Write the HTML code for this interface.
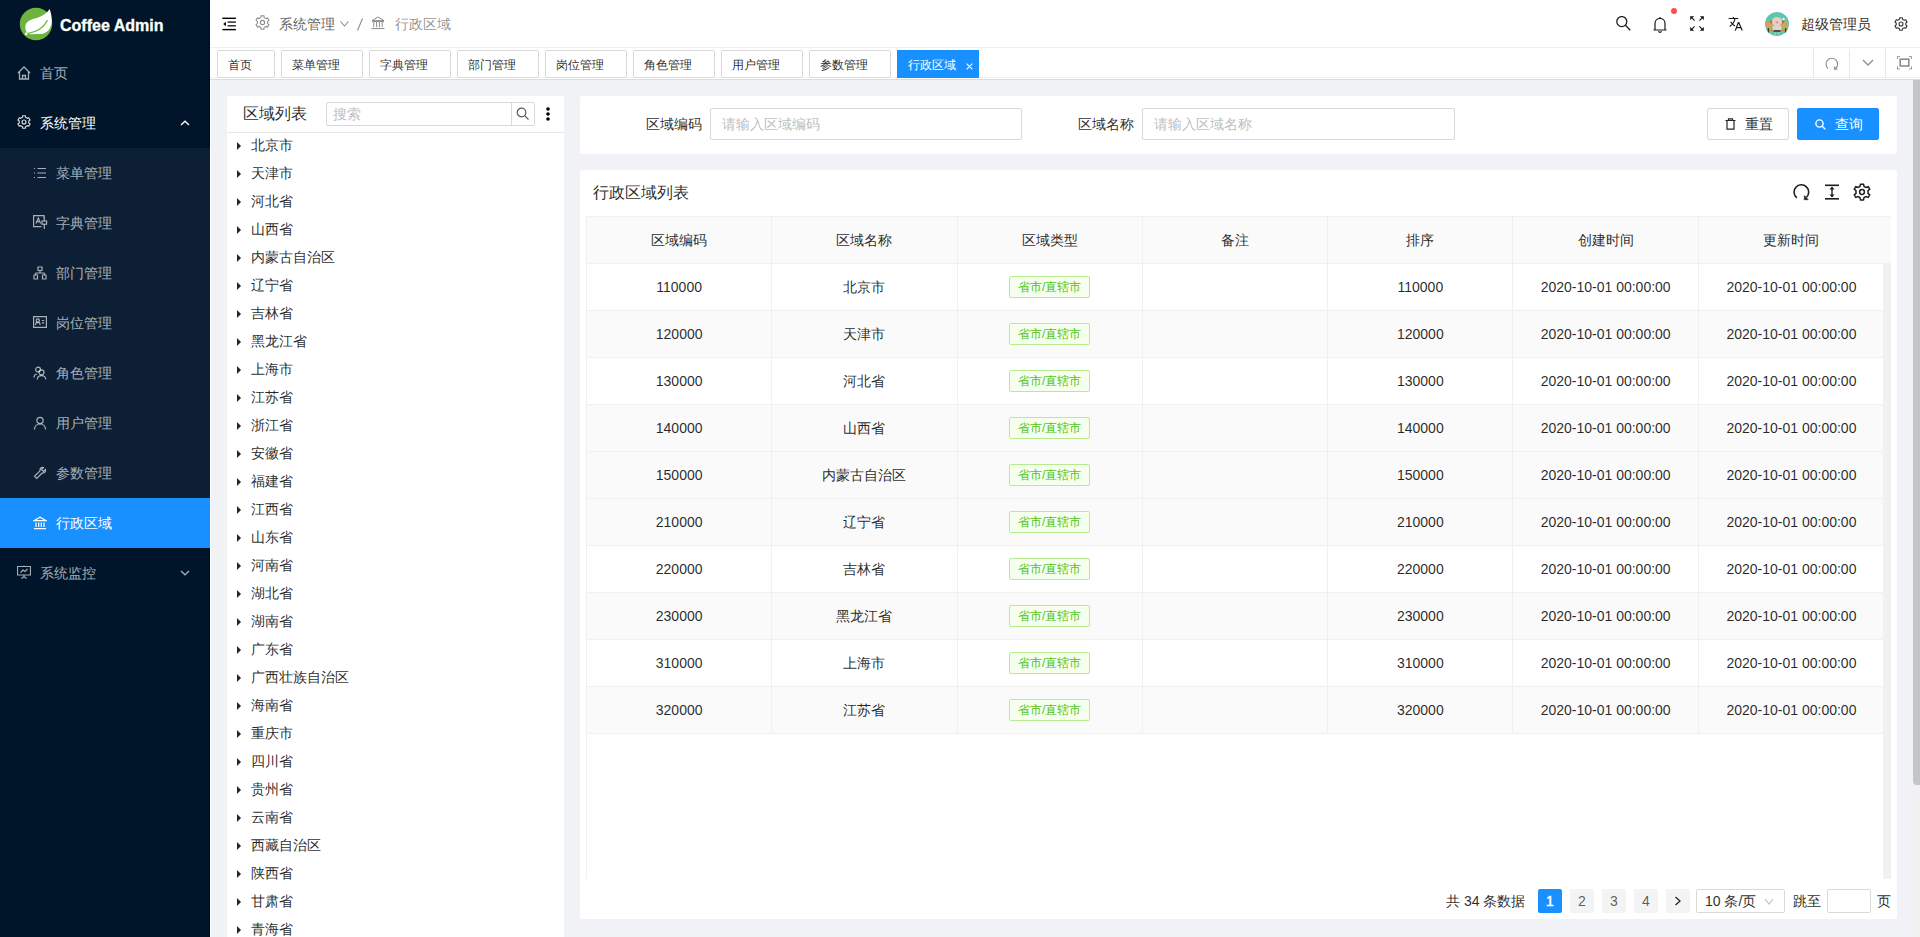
<!DOCTYPE html>
<html><head><meta charset="utf-8"><style>
*{box-sizing:border-box;margin:0;padding:0}
html,body{width:1920px;height:937px;overflow:hidden}
body{position:relative;background:#f0f2f5;font-family:"Liberation Sans",sans-serif;font-size:14px;color:rgba(0,0,0,.85)}
.abs{position:absolute}
svg{display:block}
/* sidebar */
#side{position:absolute;left:0;top:0;width:210px;height:937px;background:#001529;box-shadow:inset -1px 0 0 #000c1c}
#sideline{position:absolute;left:210px;top:0;width:1px;height:937px;background:#fff}
#logo-t{position:absolute;left:60px;top:15px;font-weight:bold;font-size:16px;-webkit-text-stroke:0.3px #fff;color:#fff;line-height:22px;letter-spacing:0}
.mi{position:absolute;left:0;width:210px;height:50px;line-height:50px;color:rgba(255,255,255,.65);font-size:14px}
.mi span{position:absolute;top:0}
.mi svg{position:absolute}
#sub{position:absolute;left:0;top:148px;width:210px;height:400px;background:#0d1f35}
.mi.act{background:#1890ff;color:#fff}
/* header */
#hdr{position:absolute;left:210px;top:0;width:1710px;height:48px;background:#fff;border-bottom:1px solid #f0f0f0}
#tabs{position:absolute;left:210px;top:48px;width:1710px;height:32px;background:#fff;border-bottom:1px solid #dcdcdc}
.tab{position:absolute;top:2px;height:28px;border:1px solid #d9d9d9;border-radius:2px;background:#fff;font-size:12px;line-height:28px;color:rgba(0,0,0,.85);padding-left:10px}
.tab.act{background:#1890ff;border-color:#1890ff;color:#fff;border-radius:0}
.tsep{position:absolute;top:1px;width:1px;height:29px;background:#e8e8e8}
/* panels */
.card{position:absolute;background:#fff;border-radius:2px}
.ti{position:absolute;left:0;height:28px;line-height:28px;font-size:14px;color:rgba(0,0,0,.85)}
.ti span{position:absolute;left:24px;top:0;white-space:nowrap}
.tri{position:absolute;left:10px;top:11px;width:0;height:0;border-left:4.5px solid rgba(0,0,0,.85);border-top:4px solid transparent;border-bottom:4px solid transparent}
.inp{position:absolute;border:1px solid #d9d9d9;border-radius:2px;background:#fff;color:#bfbfbf;font-size:14px}
.lbl{position:absolute;font-size:14px;color:rgba(0,0,0,.85);line-height:32px}
.btn{position:absolute;height:32px;border:1px solid #d9d9d9;border-radius:2px;background:#fff;font-size:14px;line-height:30px}
.btn.pri{background:#1890ff;border-color:#1890ff;color:#fff}
/* table */
#thead{position:absolute;left:586px;top:216px;width:1305px;height:48px;background:#fafafa;border-top:1px solid #f0f0f0;border-left:1px solid #f0f0f0;border-bottom:1px solid #f0f0f0}
.th{position:absolute;top:0;width:185.3px;height:46px;line-height:46px;text-align:center;border-right:1px solid #f0f0f0;color:rgba(0,0,0,.85)}
.tr{position:absolute;left:586px;width:1297px;height:47px;background:#fff;border-bottom:1px solid #f0f0f0;border-left:1px solid #f0f0f0}
.tr.g{background:#fafafa}
.td{position:absolute;top:0;width:185.3px;height:46px;line-height:46px;text-align:center;border-right:1px solid #f0f0f0;color:rgba(0,0,0,.85)}
.tag{display:inline-block;height:22px;line-height:20px;padding:0 8px;font-size:12px;border:1px solid #b7eb8f;background:#f6ffed;color:#52c41a;border-radius:2px;vertical-align:middle;position:relative;top:-1px}
.pg{position:absolute;top:889px;width:24px;height:24px;line-height:24px;text-align:center;background:#f4f4f5;border-radius:2px;color:rgba(0,0,0,.65);font-size:14px}
.pg.act{background:#1890ff;color:#fff;-webkit-text-stroke:0.5px #fff}
.th:nth-child(7){border-right:none}
.td:nth-child(7){border-right:none}


</style></head><body>
<div id="side">
  <svg class="abs" style="left:19px;top:7px" width="34" height="34" viewBox="0 0 34 34">
    <circle cx="17" cy="17" r="16.2" fill="#6db33f"/>
    <path d="M30.6 1.9 C 28 6, 23 9.5, 16 11.5 C 10 13, 6.3 15.5, 6.3 20 C 6.3 24.5, 8.5 27.2, 12 27.2 L 24 26.8 C 29 25.5, 32.8 20, 32.8 14 C 32.8 9, 31.8 5, 30.6 1.9 Z" fill="#fff"/>
    <path d="M28.6 13.3 C 25 20, 18 25, 8.5 26.6" stroke="#6db33f" stroke-width="1.3" fill="none"/>
    <circle cx="7.2" cy="26.9" r="1.3" fill="#fff"/>
  </svg>
  <div id="logo-t">Coffee Admin</div>

  <div class="mi" style="top:48px">
    <svg style="left:17px;top:18px" width="14" height="14" viewBox="0 0 14 14" fill="none" stroke="rgba(255,255,255,.65)" stroke-width="1.3"><path d="M1 7 L7 1 L13 7 M2.5 5.5 V13 H11.5 V5.5 M5.5 13 V9.5 H8.5 V13"/></svg>
    <span style="left:40px">首页</span>
  </div>
  <div class="mi" style="top:98px;color:#fff">
    <svg style="left:17px;top:17px" width="14" height="14" viewBox="0 0 24 24" fill="none" stroke="rgba(255,255,255,.85)" stroke-width="2" stroke-linejoin="round"><path d="M9.40 4.01 L9.73 1.34 L14.27 1.34 L14.60 4.01 L17.62 5.76 L20.10 4.71 L22.37 8.63 L20.22 10.25 L20.22 13.75 L22.37 15.37 L20.10 19.29 L17.62 18.24 L14.60 19.99 L14.27 22.66 L9.73 22.66 L9.40 19.99 L6.38 18.24 L3.90 19.29 L1.63 15.37 L3.78 13.75 L3.78 10.25 L1.63 8.63 L3.90 4.71 L6.38 5.76 Z"/><circle cx="12" cy="12" r="3.4"/></svg>
    <span style="left:40px">系统管理</span>
    <svg style="left:180px;top:22px" width="10" height="6" viewBox="0 0 10 6" fill="none" stroke="#fff" stroke-width="1.3"><path d="M1 5 L5 1.2 L9 5"/></svg>
  </div>
  <div id="sub"></div>
  <div class="mi" style="top:148px">
    <svg style="left:33px;top:18px" width="14" height="14" viewBox="0 0 14 14" fill="none" stroke="rgba(255,255,255,.65)" stroke-width="1.2"><path d="M1 2.5 H2 M1 7 H2 M1 11.5 H2 M4.5 2.5 H13 M4.5 7 H13 M4.5 11.5 H13"/></svg>
    <span style="left:56px">菜单管理</span>
  </div>
  <div class="mi" style="top:198px">
    <svg style="left:33px;top:17px" width="15" height="15" viewBox="0 0 15 15" fill="none" stroke="rgba(255,255,255,.65)" stroke-width="1.2"><path d="M11 3.5 V0.6 H0.6 V11.6 H8.5 M3 8.5 L5.3 3 L7.6 8.5 M3.9 6.6 H6.7 M11.3 1.5 V5.5 M11.3 9.5 V14"/><rect x="9" y="6" width="4.6" height="3.2"/></svg>
    <span style="left:56px">字典管理</span>
  </div>
  <div class="mi" style="top:248px">
    <svg style="left:33px;top:18px" width="14" height="14" viewBox="0 0 14 14" fill="none" stroke="rgba(255,255,255,.65)" stroke-width="1.2"><path d="M5 1 H9 V4.5 H5 Z M7 4.5 V7 M2.5 7 H11.5 M2.5 7 V9 M11.5 7 V9 M1 9 H4.5 V13 H1 Z M9.5 9 H13 V13 H9.5 Z"/></svg>
    <span style="left:56px">部门管理</span>
  </div>
  <div class="mi" style="top:298px">
    <svg style="left:33px;top:18px" width="14" height="13" viewBox="0 0 14 13" fill="none" stroke="rgba(255,255,255,.65)" stroke-width="1.2"><path d="M0.6 0.6 H13.4 V11.4 H0.6 Z M2.5 9 C2.5 7.2 3.5 6.3 4.8 6.3 C6.1 6.3 7.1 7.2 7.1 9 M8.8 4.5 H11.2 M8.8 6.8 H11.2"/><circle cx="4.8" cy="4.4" r="1.6"/></svg>
    <span style="left:56px">岗位管理</span>
  </div>
  <div class="mi" style="top:348px">
    <svg style="left:33px;top:18px" width="14" height="14" viewBox="0 0 14 14" fill="none" stroke="rgba(255,255,255,.65)" stroke-width="1.2"><circle cx="5.1" cy="3.5" r="2.4"/><circle cx="8.5" cy="6.3" r="2.5"/><path d="M4.3 13.6 C4.3 11 6 9.6 8.5 9.6 C11 9.6 12.8 11 12.8 13.6 M1 11.5 C1 9.5 2.3 8.2 4 8"/></svg>
    <span style="left:56px">角色管理</span>
  </div>
  <div class="mi" style="top:398px">
    <svg style="left:33px;top:18px" width="14" height="14" viewBox="0 0 14 14" fill="none" stroke="rgba(255,255,255,.65)" stroke-width="1.2"><circle cx="7" cy="4.5" r="3.2"/><path d="M1.5 13.5 C1.5 10 4 8 7 8 C10 8 12.5 10 12.5 13.5"/></svg>
    <span style="left:56px">用户管理</span>
  </div>
  <div class="mi" style="top:448px">
    <svg style="left:33px;top:18px" width="14" height="14" viewBox="0 0 14 14" fill="none" stroke="rgba(255,255,255,.65)" stroke-width="1.2"><path d="M12.5 3.5 L10.5 5.5 L8.5 3.5 L10.5 1.5 C8.5 0.8 6.5 2.5 7 4.8 L1.5 10.3 L3.7 12.5 L9.2 7 C11.5 7.5 13.2 5.5 12.5 3.5 Z"/></svg>
    <span style="left:56px">参数管理</span>
  </div>
  <div class="mi act" style="top:498px">
    <svg style="left:33px;top:18px" width="14" height="14" viewBox="0 0 14 14" fill="none" stroke="#fff" stroke-width="1.2"><path d="M1.2 4.6 L7 1.2 L12.8 4.6 Z M3 6.5 V11 M5.7 6.5 V11 M8.3 6.5 V11 M11 6.5 V11 M1 12.6 H13"/></svg>
    <span style="left:56px">行政区域</span>
  </div>
  <div class="mi" style="top:548px">
    <svg style="left:17px;top:17px" width="14" height="14" viewBox="0 0 14 14" fill="none" stroke="rgba(255,255,255,.65)" stroke-width="1.2"><path d="M7 0.5 V1.5 M0.5 1.5 H13.5 V10 H0.5 Z M3.5 7.5 L6 5 L8 6.5 L10.5 4 M7 10 V12 M4.5 13.5 L7 11.5 L9.5 13.5"/></svg>
    <span style="left:40px">系统监控</span>
    <svg style="left:180px;top:22px" width="10" height="6" viewBox="0 0 10 6" fill="none" stroke="rgba(255,255,255,.65)" stroke-width="1.3"><path d="M1 1 L5 4.8 L9 1"/></svg>
  </div>
</div>

<div id="sideline"></div>
<div id="hdr">
  <svg class="abs" style="left:12px;top:17px" width="14" height="14" viewBox="0 0 14 14" fill="#000"><rect x="0.3" y="0.6" width="13.6" height="1.4"/><rect x="5.6" y="4.4" width="8.3" height="1.4" fill="#222"/><rect x="5.6" y="8.1" width="8.3" height="1.4" fill="#222"/><rect x="0.3" y="11.9" width="13.6" height="1.4"/><path d="M1.2 7 L3.8 4.7 V9.3 Z"/></svg>
  <svg class="abs" style="left:45px;top:15px" width="15" height="15" viewBox="0 0 24 24" fill="none" stroke="#8c8c8c" stroke-width="1.7"><path d="M9.40 4.01 L9.73 1.34 L14.27 1.34 L14.60 4.01 L17.62 5.76 L20.10 4.71 L22.37 8.63 L20.22 10.25 L20.22 13.75 L22.37 15.37 L20.10 19.29 L17.62 18.24 L14.60 19.99 L14.27 22.66 L9.73 22.66 L9.40 19.99 L6.38 18.24 L3.90 19.29 L1.63 15.37 L3.78 13.75 L3.78 10.25 L1.63 8.63 L3.90 4.71 L6.38 5.76 Z"/><circle cx="12" cy="12" r="3.4"/></svg>
  <div class="abs" style="left:69px;top:13px;line-height:22px;color:rgba(0,0,0,.65)">系统管理</div>
  <svg class="abs" style="left:130px;top:21px" width="9" height="6" viewBox="0 0 9 6" fill="none" stroke="#8c8c8c" stroke-width="1.1"><path d="M0.5 0.5 L4.5 5 L8.5 0.5"/></svg>
  <svg class="abs" style="left:146px;top:18px" width="8" height="13" viewBox="0 0 8 13" stroke="#8c8c8c" stroke-width="1.1"><path d="M6.5 0.5 L1.5 12.5"/></svg>
  <svg class="abs" style="left:161px;top:16px" width="14" height="14" viewBox="0 0 14 14" fill="none" stroke="#8c8c8c" stroke-width="1"><path d="M1 4.6 L7 1 L13 4.6 Z M1 5.6 H13 M2.8 6 V11.2 M5.6 6 V11.2 M8.4 6 V11.2 M11.2 6 V11.2 M0.5 12.6 H13.5" stroke-linejoin="round"/></svg>
  <div class="abs" style="left:185px;top:13px;line-height:22px;color:rgba(0,0,0,.45)">行政区域</div>

  <svg class="abs" style="left:1406px;top:16px" width="15" height="15" viewBox="0 0 15 15" fill="none" stroke="#1a1a1a" stroke-width="1.25"><circle cx="5.8" cy="5.6" r="5"/><path d="M9.4 9.3 L14.3 14.3"/></svg>
  <svg class="abs" style="left:1443px;top:16px" width="14" height="17" viewBox="0 0 14 17" fill="none" stroke="#1a1a1a" stroke-width="1.2"><path d="M2 14 V7.5 C2 4.5 4.2 2.4 7 2.4 C9.8 2.4 12 4.5 12 7.5 V14 M0.5 14 H13.5 M5.6 15 C5.8 16 6.3 16.4 7 16.4 C7.7 16.4 8.2 16 8.4 15 M7 1 V2.4"/></svg>

  <div class="abs" style="left:1461px;top:8px;width:6px;height:6px;border-radius:3px;background:#ff4d4f"></div>
  <svg class="abs" style="left:1480px;top:16px" width="14" height="15" viewBox="0 0 14 15" fill="none" stroke="#1a1a1a" stroke-width="1.2"><path d="M1.2 1.2 L4.6 4.6 M12.8 1.2 L9.4 4.6 M1.2 13.8 L4.6 10.4 M12.8 13.8 L9.4 10.4"/><path d="M0.4 0.4 H3.6 L0.4 3.6 Z M13.6 0.4 H10.4 L13.6 3.6 Z M0.4 14.6 H3.6 L0.4 11.4 Z M13.6 14.6 H10.4 L13.6 11.4 Z" fill="#1a1a1a" stroke-width="0.6"/></svg>
  <svg class="abs" style="left:1518px;top:17px" width="15" height="14" viewBox="0 0 15 14" fill="none" stroke="#1a1a1a" stroke-width="1.2"><path d="M0.6 1.5 H10.3 M5.3 0 V1.5 M1.7 9.5 C4.5 7.5 6.5 5 7 1.5 M2.6 4.8 C3.8 6.8 5.3 8.2 7 9 M7.3 13.6 L10.3 5.5 H10.8 L14.2 13.6 M8.6 10.6 H12.9"/></svg>
  <svg class="abs" style="left:1555px;top:12px" width="24" height="24" viewBox="0 0 24 24"><defs><clipPath id="av"><circle cx="12" cy="12" r="12"/></clipPath></defs><g clip-path="url(#av)"><rect width="24" height="24" fill="#5cc6b3"/><rect x="1" y="9.6" width="22" height="6.6" fill="#d6a356"/><rect x="1.5" y="17.8" width="21" height="1.4" fill="#c89140"/><rect x="2.8" y="16" width="1.2" height="6" fill="#3b3b3b"/><rect x="20" y="16" width="1.2" height="6" fill="#3b3b3b"/><circle cx="6.3" cy="9.8" r="1.6" fill="#a8705a"/><circle cx="17.7" cy="9.8" r="1.6" fill="#a8705a"/><ellipse cx="12" cy="9.6" rx="5" ry="4.6" fill="#edcdbc"/><ellipse cx="12" cy="10.3" rx="1.6" ry="1.1" fill="#d9958f"/><rect x="7.5" y="13.5" width="9" height="5" rx="1.5" fill="#d6d6d6"/><rect x="8.5" y="18" width="7" height="2" fill="#5d4c3e"/><rect x="9.5" y="20" width="1.4" height="3" fill="#b9b9b9"/><rect x="13.1" y="20" width="1.4" height="3" fill="#b9b9b9"/><circle cx="18.5" cy="7" r="1.3" fill="#eeeeee"/></g></svg>
  <div class="abs" style="left:1591px;top:13px;line-height:22px;color:rgba(0,0,0,.85)">超级管理员</div>
  <svg class="abs" style="left:1684px;top:17px" width="14" height="14" viewBox="0 0 24 24" fill="none" stroke="#333" stroke-width="1.9" stroke-linejoin="round"><path d="M9.40 4.01 L9.73 1.34 L14.27 1.34 L14.60 4.01 L17.62 5.76 L20.10 4.71 L22.37 8.63 L20.22 10.25 L20.22 13.75 L22.37 15.37 L20.10 19.29 L17.62 18.24 L14.60 19.99 L14.27 22.66 L9.73 22.66 L9.40 19.99 L6.38 18.24 L3.90 19.29 L1.63 15.37 L3.78 13.75 L3.78 10.25 L1.63 8.63 L3.90 4.71 L6.38 5.76 Z"/><circle cx="12" cy="12" r="3.4"/></svg>
</div>

<div id="tabs">
  <div class="abs" style="left:0;top:29px;width:1710px;height:1px;background:#f0f0f0"></div>
    <div class="tab" style="left:7px;width:58px">首页</div>
  <div class="tab" style="left:71px;width:82px">菜单管理</div>
  <div class="tab" style="left:159px;width:82px">字典管理</div>
  <div class="tab" style="left:247px;width:82px">部门管理</div>
  <div class="tab" style="left:335px;width:82px">岗位管理</div>
  <div class="tab" style="left:423px;width:82px">角色管理</div>
  <div class="tab" style="left:511px;width:82px">用户管理</div>
  <div class="tab" style="left:599px;width:82px">参数管理</div>
  <div class="tab act" style="left:687px;width:82px">行政区域<svg style="position:absolute;left:68px;top:12px" width="7" height="7" viewBox="0 0 7 7" stroke="#fff" stroke-width="1.1"><path d="M0.6 0.6 L6.4 6.4 M6.4 0.6 L0.6 6.4"/></svg></div>
  <div class="tsep" style="left:1603px"></div>
  <div class="tsep" style="left:1639px"></div>
  <div class="tsep" style="left:1675px"></div>
  <svg class="abs" style="left:1615px;top:9px" width="14" height="14" viewBox="0 0 14 14" fill="none" stroke="#8c8c8c" stroke-width="1.1"><path d="M3.2 11.6 A5.8 5.8 0 1 1 10.9 11.2"/><path d="M9.2 9.4 V12.6 H12.4 Z" fill="#8c8c8c" stroke-width="0.4"/></svg>
  <svg class="abs" style="left:1652px;top:11px" width="12" height="7" viewBox="0 0 12 7" fill="none" stroke="#8c8c8c" stroke-width="1.3"><path d="M1 1 L6 6 L11 1"/></svg>
  <svg class="abs" style="left:1687px;top:8px" width="15" height="14" viewBox="0 0 15 14" fill="none" stroke="#8c8c8c" stroke-width="0.9"><path d="M0.5 3 V0.5 H3 M12 0.5 H14.5 V3 M14.5 10.5 V13 H12 M3 13 H0.5 V10.5"/><rect x="3.2" y="3.2" width="8.6" height="6.8" stroke-width="1.6"/></svg>
</div>

<!-- scrollbar -->
<div class="abs" style="left:1913px;top:80px;width:7px;height:857px;background:#f1f1f1"></div>
<div class="abs" style="left:1913px;top:80px;width:9px;height:705px;background:#c4c5c8;border-radius:0 0 4px 4px"></div>

<!-- tree panel -->
<div class="card" style="left:227px;top:96px;width:337px;height:900px;border-radius:0">
  <div class="abs" style="left:16px;top:7px;font-size:16px;line-height:22px;color:rgba(0,0,0,.85)">区域列表</div>
  <div class="inp" style="left:99px;top:6px;width:209px;height:24px;font-size:14px;line-height:22px;padding-left:6px">搜索</div>
  <div class="abs" style="left:284px;top:6px;width:24px;height:24px;border-left:1px solid #d9d9d9"></div>
  <svg class="abs" style="left:289px;top:11px" width="14" height="14" viewBox="0 0 14 14" fill="none" stroke="#595959" stroke-width="1.2"><circle cx="5.5" cy="5.5" r="4.3"/><path d="M8.6 8.6 L12.5 12.5"/></svg>
  <svg class="abs" style="left:318px;top:10px" width="6" height="16" viewBox="0 0 6 16" fill="#000"><circle cx="3" cy="3" r="1.8"/><circle cx="3" cy="8" r="1.8"/><circle cx="3" cy="13" r="1.8"/></svg>
  <div class="abs" style="left:0;top:36px;width:337px;height:1px;background:#e8e8e8"></div>
  <div class="abs" style="left:0;top:0;width:337px;height:900px">
<div class="ti" style="top:35px"><i class="tri"></i><span>北京市</span></div>
<div class="ti" style="top:63px"><i class="tri"></i><span>天津市</span></div>
<div class="ti" style="top:91px"><i class="tri"></i><span>河北省</span></div>
<div class="ti" style="top:119px"><i class="tri"></i><span>山西省</span></div>
<div class="ti" style="top:147px"><i class="tri"></i><span>内蒙古自治区</span></div>
<div class="ti" style="top:175px"><i class="tri"></i><span>辽宁省</span></div>
<div class="ti" style="top:203px"><i class="tri"></i><span>吉林省</span></div>
<div class="ti" style="top:231px"><i class="tri"></i><span>黑龙江省</span></div>
<div class="ti" style="top:259px"><i class="tri"></i><span>上海市</span></div>
<div class="ti" style="top:287px"><i class="tri"></i><span>江苏省</span></div>
<div class="ti" style="top:315px"><i class="tri"></i><span>浙江省</span></div>
<div class="ti" style="top:343px"><i class="tri"></i><span>安徽省</span></div>
<div class="ti" style="top:371px"><i class="tri"></i><span>福建省</span></div>
<div class="ti" style="top:399px"><i class="tri"></i><span>江西省</span></div>
<div class="ti" style="top:427px"><i class="tri"></i><span>山东省</span></div>
<div class="ti" style="top:455px"><i class="tri"></i><span>河南省</span></div>
<div class="ti" style="top:483px"><i class="tri"></i><span>湖北省</span></div>
<div class="ti" style="top:511px"><i class="tri"></i><span>湖南省</span></div>
<div class="ti" style="top:539px"><i class="tri"></i><span>广东省</span></div>
<div class="ti" style="top:567px"><i class="tri"></i><span>广西壮族自治区</span></div>
<div class="ti" style="top:595px"><i class="tri"></i><span>海南省</span></div>
<div class="ti" style="top:623px"><i class="tri"></i><span>重庆市</span></div>
<div class="ti" style="top:651px"><i class="tri"></i><span>四川省</span></div>
<div class="ti" style="top:679px"><i class="tri"></i><span>贵州省</span></div>
<div class="ti" style="top:707px"><i class="tri"></i><span>云南省</span></div>
<div class="ti" style="top:735px"><i class="tri"></i><span>西藏自治区</span></div>
<div class="ti" style="top:763px"><i class="tri"></i><span>陕西省</span></div>
<div class="ti" style="top:791px"><i class="tri"></i><span>甘肃省</span></div>
<div class="ti" style="top:819px"><i class="tri"></i><span>青海省</span></div>
  </div>
</div>

<!-- search card -->
<div class="card" style="left:580px;top:96px;width:1317px;height:58px">
  <div class="lbl" style="left:66px;top:12px">区域编码</div>
  <div class="inp" style="left:130px;top:12px;width:312px;height:32px;line-height:30px;padding-left:11px">请输入区域编码</div>
  <div class="lbl" style="left:498px;top:12px">区域名称</div>
  <div class="inp" style="left:562px;top:12px;width:313px;height:32px;line-height:30px;padding-left:11px">请输入区域名称</div>
  <div class="btn" style="left:1127px;top:12px;width:82px">
    <svg class="abs" style="left:17px;top:9px" width="11" height="12" viewBox="0 0 11 12" fill="none" stroke="#262626" stroke-width="1.2"><path d="M0.5 2.5 H10.5 M3.5 2.5 V0.8 H7.5 V2.5 M2 2.5 V11.2 H9 V2.5"/></svg>
    <span class="abs" style="left:37px;top:0">重置</span>
  </div>
  <div class="btn pri" style="left:1217px;top:12px;width:82px">
    <svg class="abs" style="left:17px;top:10px" width="11" height="11" viewBox="0 0 11 11" fill="none" stroke="#fff" stroke-width="1.4"><circle cx="4.5" cy="4.5" r="3.6"/><path d="M7.2 7.2 L10.3 10.3"/></svg>
    <span class="abs" style="left:37px;top:0">查询</span>
  </div>
</div>

<!-- table card -->
<div class="card" style="left:580px;top:170px;width:1317px;height:749px">
  <div class="abs" style="left:13px;top:12px;font-size:16px;line-height:22px;color:rgba(0,0,0,.85)">行政区域列表</div>
  <svg class="abs" style="left:1213px;top:14px" width="17" height="17" viewBox="0 0 17 17" fill="none" stroke="#1f1f1f" stroke-width="1.6"><path d="M3.8 13.8 A7.3 7.3 0 1 1 13.4 13.4"/><path d="M11.3 11.6 V15.7 H15.2 Z" fill="#1f1f1f" stroke-width="0.6"/></svg>
  <svg class="abs" style="left:1245px;top:14px" width="14" height="16" viewBox="0 0 14 16" fill="#1f1f1f"><rect x="0" y="0.5" width="14" height="1.6"/><rect x="0" y="14" width="14" height="1.6"/><rect x="6.3" y="3.5" width="1.4" height="9"/><path d="M7 2.5 L9.5 5.5 H4.5 Z M7 13.5 L9.5 10.5 H4.5 Z"/></svg>
  <svg class="abs" style="left:1273px;top:13px" width="18" height="18" viewBox="0 0 24 24" fill="none" stroke="#1f1f1f" stroke-width="2"><path d="M10 1.5 H14 L14.7 4.5 L17.5 6 L20.3 4.8 L22.3 8.2 L20 10.2 V13.8 L22.3 15.8 L20.3 19.2 L17.5 18 L14.7 19.5 L14 22.5 H10 L9.3 19.5 L6.5 18 L3.7 19.2 L1.7 15.8 L4 13.8 V10.2 L1.7 8.2 L3.7 4.8 L6.5 6 L9.3 4.5 Z"/><circle cx="12" cy="12" r="3.2"/></svg>
</div>

<div id="thead">
  <div class="th" style="left:0">区域编码</div>
  <div class="th" style="left:185.3px">区域名称</div>
  <div class="th" style="left:370.6px">区域类型</div>
  <div class="th" style="left:555.9px">备注</div>
  <div class="th" style="left:741.2px">排序</div>
  <div class="th" style="left:926.5px">创建时间</div>
  <div class="th" style="left:1111.8px">更新时间</div>
</div>
<div class="tr" style="top:264px"><div class="td" style="left:0">110000</div><div class="td" style="left:185.3px">北京市</div><div class="td" style="left:370.6px"><span class="tag">省市/直辖市</span></div><div class="td" style="left:555.9px"></div><div class="td" style="left:741.2px">110000</div><div class="td" style="left:926.5px">2020-10-01 00:00:00</div><div class="td" style="left:1111.8px">2020-10-01 00:00:00</div></div>
<div class="tr g" style="top:311px"><div class="td" style="left:0">120000</div><div class="td" style="left:185.3px">天津市</div><div class="td" style="left:370.6px"><span class="tag">省市/直辖市</span></div><div class="td" style="left:555.9px"></div><div class="td" style="left:741.2px">120000</div><div class="td" style="left:926.5px">2020-10-01 00:00:00</div><div class="td" style="left:1111.8px">2020-10-01 00:00:00</div></div>
<div class="tr" style="top:358px"><div class="td" style="left:0">130000</div><div class="td" style="left:185.3px">河北省</div><div class="td" style="left:370.6px"><span class="tag">省市/直辖市</span></div><div class="td" style="left:555.9px"></div><div class="td" style="left:741.2px">130000</div><div class="td" style="left:926.5px">2020-10-01 00:00:00</div><div class="td" style="left:1111.8px">2020-10-01 00:00:00</div></div>
<div class="tr g" style="top:405px"><div class="td" style="left:0">140000</div><div class="td" style="left:185.3px">山西省</div><div class="td" style="left:370.6px"><span class="tag">省市/直辖市</span></div><div class="td" style="left:555.9px"></div><div class="td" style="left:741.2px">140000</div><div class="td" style="left:926.5px">2020-10-01 00:00:00</div><div class="td" style="left:1111.8px">2020-10-01 00:00:00</div></div>
<div class="tr g" style="top:452px"><div class="td" style="left:0">150000</div><div class="td" style="left:185.3px">内蒙古自治区</div><div class="td" style="left:370.6px"><span class="tag">省市/直辖市</span></div><div class="td" style="left:555.9px"></div><div class="td" style="left:741.2px">150000</div><div class="td" style="left:926.5px">2020-10-01 00:00:00</div><div class="td" style="left:1111.8px">2020-10-01 00:00:00</div></div>
<div class="tr g" style="top:499px"><div class="td" style="left:0">210000</div><div class="td" style="left:185.3px">辽宁省</div><div class="td" style="left:370.6px"><span class="tag">省市/直辖市</span></div><div class="td" style="left:555.9px"></div><div class="td" style="left:741.2px">210000</div><div class="td" style="left:926.5px">2020-10-01 00:00:00</div><div class="td" style="left:1111.8px">2020-10-01 00:00:00</div></div>
<div class="tr" style="top:546px"><div class="td" style="left:0">220000</div><div class="td" style="left:185.3px">吉林省</div><div class="td" style="left:370.6px"><span class="tag">省市/直辖市</span></div><div class="td" style="left:555.9px"></div><div class="td" style="left:741.2px">220000</div><div class="td" style="left:926.5px">2020-10-01 00:00:00</div><div class="td" style="left:1111.8px">2020-10-01 00:00:00</div></div>
<div class="tr g" style="top:593px"><div class="td" style="left:0">230000</div><div class="td" style="left:185.3px">黑龙江省</div><div class="td" style="left:370.6px"><span class="tag">省市/直辖市</span></div><div class="td" style="left:555.9px"></div><div class="td" style="left:741.2px">230000</div><div class="td" style="left:926.5px">2020-10-01 00:00:00</div><div class="td" style="left:1111.8px">2020-10-01 00:00:00</div></div>
<div class="tr" style="top:640px"><div class="td" style="left:0">310000</div><div class="td" style="left:185.3px">上海市</div><div class="td" style="left:370.6px"><span class="tag">省市/直辖市</span></div><div class="td" style="left:555.9px"></div><div class="td" style="left:741.2px">310000</div><div class="td" style="left:926.5px">2020-10-01 00:00:00</div><div class="td" style="left:1111.8px">2020-10-01 00:00:00</div></div>
<div class="tr g" style="top:687px"><div class="td" style="left:0">320000</div><div class="td" style="left:185.3px">江苏省</div><div class="td" style="left:370.6px"><span class="tag">省市/直辖市</span></div><div class="td" style="left:555.9px"></div><div class="td" style="left:741.2px">320000</div><div class="td" style="left:926.5px">2020-10-01 00:00:00</div><div class="td" style="left:1111.8px">2020-10-01 00:00:00</div></div>
<div class="abs" style="left:586px;top:734px;width:1px;height:145px;background:#f0f0f0"></div>
<div class="abs" style="left:1883px;top:264px;width:8px;height:615px;background:#f1f1f1"></div>

<!-- pagination -->
<div class="abs" style="left:1446px;top:890px;line-height:22px;color:rgba(0,0,0,.85)">共 34 条数据</div>
<div class="pg act" style="left:1538px">1</div>
<div class="pg" style="left:1570px">2</div>
<div class="pg" style="left:1602px">3</div>
<div class="pg" style="left:1634px">4</div>
<div class="pg" style="left:1666px"><svg style="position:absolute;left:8px;top:7px" width="8" height="10" viewBox="0 0 8 10" fill="none" stroke="#262626" stroke-width="1.3"><path d="M1.5 1 L6 5 L1.5 9"/></svg></div>
<div class="inp" style="left:1696px;top:889px;width:89px;height:24px;line-height:22px;padding-left:8px;color:rgba(0,0,0,.85)">10 条/页<svg style="position:absolute;left:67px;top:8px" width="10" height="7" viewBox="0 0 10 7" fill="none" stroke="#bfbfbf" stroke-width="1.1"><path d="M1 1 L5 6 L9 1"/></svg></div>
<div class="abs" style="left:1793px;top:890px;line-height:22px;color:rgba(0,0,0,.85)">跳至</div>
<div class="inp" style="left:1827px;top:889px;width:44px;height:24px"></div>
<div class="abs" style="left:1877px;top:890px;line-height:22px;color:rgba(0,0,0,.85)">页</div>

</body></html>
